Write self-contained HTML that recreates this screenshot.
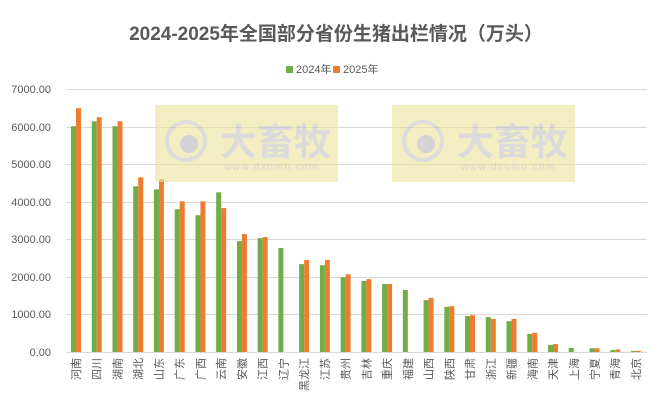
<!DOCTYPE html>
<html><head><meta charset="utf-8"><style>
html,body{margin:0;padding:0;background:#fff;}
svg{display:block;font-family:"Liberation Sans","Noto Sans CJK SC",sans-serif;}
</style></head><body>
<svg id="c" width="666" height="403" xmlns="http://www.w3.org/2000/svg">
<rect width="666" height="403" fill="#fff"/>
<text x="336" y="40" text-anchor="middle" font-size="19" font-weight="bold" fill="#595959">2024-2025年全国部分省份生猪出栏情况（万头）</text>
<rect x="286" y="66" width="7" height="7" fill="#70AD47"/>
<text x="296" y="73" font-size="11" fill="#595959">2024年</text>
<rect x="333" y="66" width="7" height="7" fill="#ED7D31"/>
<text x="343" y="73" font-size="11" fill="#595959">2025年</text>
<g stroke="#d9d9d9" stroke-width="1">
<line x1="66" x2="647" y1="89.5" y2="89.5"/><line x1="66" x2="647" y1="127.5" y2="127.5"/>
<line x1="66" x2="647" y1="164.5" y2="164.5"/><line x1="66" x2="647" y1="202.5" y2="202.5"/>
<line x1="66" x2="647" y1="239.5" y2="239.5"/><line x1="66" x2="647" y1="277.5" y2="277.5"/>
<line x1="66" x2="647" y1="314.5" y2="314.5"/><line x1="66" x2="647" y1="352.5" y2="352.5"/>
</g>
<g font-size="11" fill="#595959" text-anchor="end">
<text x="51" y="93">7000.00</text><text x="51" y="131">6000.00</text><text x="51" y="168">5000.00</text>
<text x="51" y="206">4000.00</text><text x="51" y="243">3000.00</text><text x="51" y="281">2000.00</text>
<text x="51" y="318">1000.00</text><text x="51" y="356">0.00</text>
</g>
<g id="bars"></g>
<g opacity="0.6">
<rect x="155" y="105" width="183" height="77" fill="#ece39a"/>
<rect x="392" y="105" width="183" height="77" fill="#ece39a"/>
<g fill="none" stroke="#c8c8c8" stroke-width="4"><circle cx="186" cy="141" r="19"/><circle cx="423" cy="141" r="19"/></g>
<g fill="#b8b8b8"><circle cx="189" cy="144" r="9"/><circle cx="426" cy="144" r="9"/></g>
<g font-size="37" font-weight="bold" fill="#c4c4c4"><text x="220" y="155">大畜牧</text><text x="457" y="155">大畜牧</text></g>
<g font-size="10" fill="#bdbdbd"><text x="224" y="170" letter-spacing="1.5">www.dxumu.com</text><text x="461" y="170" letter-spacing="1.5">www.dxumu.com</text></g>
</g>
<g font-size="11" fill="#595959" text-anchor="end">
<text transform="translate(80,358) rotate(-90)">河南</text>
<text transform="translate(100.7,358) rotate(-90)">四川</text>
<text transform="translate(121.5,358) rotate(-90)">湖南</text>
<text transform="translate(142.2,358) rotate(-90)">湖北</text>
<text transform="translate(163,358) rotate(-90)">山东</text>
<text transform="translate(183.7,358) rotate(-90)">广东</text>
<text transform="translate(204.4,358) rotate(-90)">广西</text>
<text transform="translate(225.2,358) rotate(-90)">云南</text>
<text transform="translate(245.9,358) rotate(-90)">安徽</text>
<text transform="translate(266.7,358) rotate(-90)">江西</text>
<text transform="translate(287.4,358) rotate(-90)">辽宁</text>
<text transform="translate(308.1,358) rotate(-90)">黑龙江</text>
<text transform="translate(328.9,358) rotate(-90)">江苏</text>
<text transform="translate(349.6,358) rotate(-90)">贵州</text>
<text transform="translate(370.4,358) rotate(-90)">吉林</text>
<text transform="translate(391.1,358) rotate(-90)">重庆</text>
<text transform="translate(411.8,358) rotate(-90)">福建</text>
<text transform="translate(432.6,358) rotate(-90)">山西</text>
<text transform="translate(453.3,358) rotate(-90)">陕西</text>
<text transform="translate(474.1,358) rotate(-90)">甘肃</text>
<text transform="translate(494.8,358) rotate(-90)">浙江</text>
<text transform="translate(515.5,358) rotate(-90)">新疆</text>
<text transform="translate(536.3,358) rotate(-90)">海南</text>
<text transform="translate(557,358) rotate(-90)">天津</text>
<text transform="translate(577.8,358) rotate(-90)">上海</text>
<text transform="translate(598.5,358) rotate(-90)">宁夏</text>
<text transform="translate(619.2,358) rotate(-90)">青海</text>
<text transform="translate(640,358) rotate(-90)">北京</text>
</g>
</svg>
<script>
var a=[6010,6140,6010,4410,4330,3800,3640,4250,2950,3030,2770,2340,2310,1990,1890,1810,1650,1380,1200,960,930,820,480,190,110,100,50,30];
var b=[6490,6250,6140,4650,4600,4010,4010,3830,3140,3060,0,2450,2450,2070,1940,1810,0,1440,1220,980,880,880,510,210,0,100,70,30];
var g=document.getElementById('bars'),ns='http://www.w3.org/2000/svg';
for(var i=0;i<28;i++){var x=71+i*20.74;
[[a[i],'#70AD47',x],[b[i],'#ED7D31',x+5]].forEach(function(d){if(!d[0])return;var h=d[0]*0.03757;
var r=document.createElementNS(ns,'rect');r.setAttribute('x',d[2]);r.setAttribute('y',352-h);r.setAttribute('width',5);r.setAttribute('height',h);r.setAttribute('fill',d[1]);g.appendChild(r);});}
</script>
</body></html>
